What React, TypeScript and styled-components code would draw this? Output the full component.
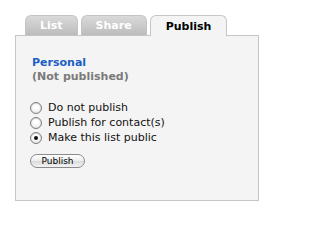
import React, { useState } from "react";
import styled, { createGlobalStyle } from "styled-components";

const GlobalStyle = createGlobalStyle`
  html, body {
    margin: 0;
    background: #ffffff;
    font-family: "DejaVu Sans", Verdana, sans-serif;
  }
`;

const Page = styled.div`
  padding: 15px 0 0 15px;
  width: 244px;
`;

const TabBar = styled.div`
  display: flex;
  align-items: flex-end;
  gap: 3px;
  padding-left: 10px;
  height: 21px;
  position: relative;
  z-index: 1;
  margin-bottom: -1px;
`;

const Tab = styled.div<{ $active?: boolean }>`
  box-sizing: border-box;
  padding: 0 ${(p) => (p.$active ? "15px" : "14px")};
  display: flex;
  align-items: center;
  justify-content: center;
  font-size: 11px;
  font-weight: bold;
  border-radius: 6px 6px 0 0;
  border: 1px solid ${(p) => (p.$active ? "#c6c6c6" : "#c4c4c4")};
  border-bottom: none;
  color: ${(p) => (p.$active ? "#000" : "#fff")};
  background: ${(p) =>
    p.$active ? "#f4f4f4" : "linear-gradient(#dadada, #bcbcbc)"};
  height: ${(p) => (p.$active ? "21px" : "20px")};
  margin-bottom: ${(p) => (p.$active ? "0" : "1px")};
  cursor: pointer;
`;

const Panel = styled.div`
  height: 166px;
  box-sizing: border-box;
  border: 1px solid #c6c6c6;
  background: #f4f4f4;
  padding: 20px 14px 0 14px;
`;

const Title = styled.div`
  font-size: 11px;
  font-weight: bold;
  line-height: 14px;
  color: #1b5fc4;
  padding-left: 2px;
`;

const Status = styled(Title)`
  color: #7a7a7a;
`;

const Options = styled.div`
  margin-top: 16px;
  display: flex;
  flex-direction: column;
`;

const Option = styled.label`
  display: flex;
  align-items: center;
  gap: 6px;
  height: 15px;
  font-size: 11px;
  color: #111;
  cursor: pointer;
`;

const Radio = styled.span<{ $checked?: boolean }>`
  width: 12px;
  height: 12px;
  box-sizing: border-box;
  border-radius: 50%;
  border: 1px solid #7d7d7d;
  background: radial-gradient(circle at 50% 35%, #ffffff 30%, #dcdcdc 100%);
  box-shadow: inset 0 1px 1px rgba(0, 0, 0, 0.15);
  display: flex;
  align-items: center;
  justify-content: center;

  &::after {
    content: "";
    width: 4px;
    height: 4px;
    border-radius: 50%;
    background: #111;
    display: ${(p) => (p.$checked ? "block" : "none")};
  }
`;

const Button = styled.button`
  display: block;
  margin-top: 9px;
  width: 55px;
  height: 14px;
  padding: 0;
  border: 1px solid #8a8a8a;
  border-radius: 7px;
  background: linear-gradient(#ffffff, #ececec 50%, #dadada 51%, #f4f4f4);
  font-family: "DejaVu Sans", Verdana, sans-serif;
  font-size: 9px;
  line-height: 12px;
  color: #000;
  cursor: pointer;
`;

const options = ["Do not publish", "Publish for contact(s)", "Make this list public"];

export default function App() {
  const [tab, setTab] = useState("Publish");
  const [choice, setChoice] = useState(2);

  return (
    <Page>
      <GlobalStyle />
      <TabBar>
        {["List", "Share", "Publish"].map((t) => (
          <Tab key={t} $active={tab === t} onClick={() => setTab(t)}>
            {t}
          </Tab>
        ))}
      </TabBar>
      <Panel>
        <Title>Personal</Title>
        <Status>(Not published)</Status>
        <Options>
          {options.map((o, i) => (
            <Option key={o} onClick={() => setChoice(i)}>
              <Radio $checked={choice === i} />
              {o}
            </Option>
          ))}
        </Options>
        <Button>Publish</Button>
      </Panel>
    </Page>
  );
}
